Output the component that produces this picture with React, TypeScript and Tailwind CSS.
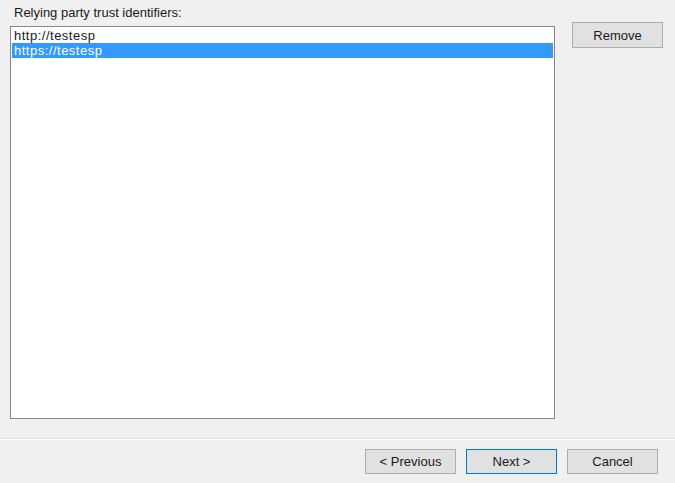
const identifiers = ["http://testesp", "https://testesp"];
const selected = 1;

function WinButton({ label, primary }: { label: string; primary?: boolean }) {
  return (
    <button
      className={
        "w-[91px] h-[25px] bg-[#e1e1e1] border text-[13px] text-[#1a1a1a] leading-none " +
        (primary ? "border-[#0078d7]" : "border-[#adadad]")
      }
    >
      {label}
    </button>
  );
}

export default function App() {
  return (
    <div className="h-[483px] w-[675px] bg-[#f0f0f0] flex flex-col font-['Liberation_Sans',Arial,sans-serif] text-[#1a1a1a]">
      <div className="flex h-[438px] pl-[10px] pt-[5px]">
        <div className="flex flex-col">
          <label className="h-[21px] pl-[4px] text-[13px] leading-[15px]">
            Relying party trust identifiers:
          </label>
          <div className="w-[545px] h-[393px] bg-white border border-[#828790] p-[1px]">
            {identifiers.map((id, i) => (
              <div
                key={id}
                className={
                  "h-[15px] pl-[2px] text-[13px] leading-[15px] tracking-[0.5px] " +
                  (i === selected ? "bg-[#3399ff] text-white" : "")
                }
              >
                {id}
              </div>
            ))}
          </div>
        </div>
        <div className="ml-[17px] mt-[17px] h-[26px]">
          <button className="w-[91px] h-[26px] bg-[#e1e1e1] border border-[#adadad] text-[13px] leading-none">
            Remove
          </button>
        </div>
      </div>

      <div className="border-t border-[#e3e3e3]" />
      <div className="border-t border-white" />

      <div className="flex justify-end gap-[10px] pr-[17px] pt-[9px]">
        <WinButton label="< Previous" />
        <WinButton label="Next >" primary />
        <WinButton label="Cancel" />
      </div>
    </div>
  );
}
